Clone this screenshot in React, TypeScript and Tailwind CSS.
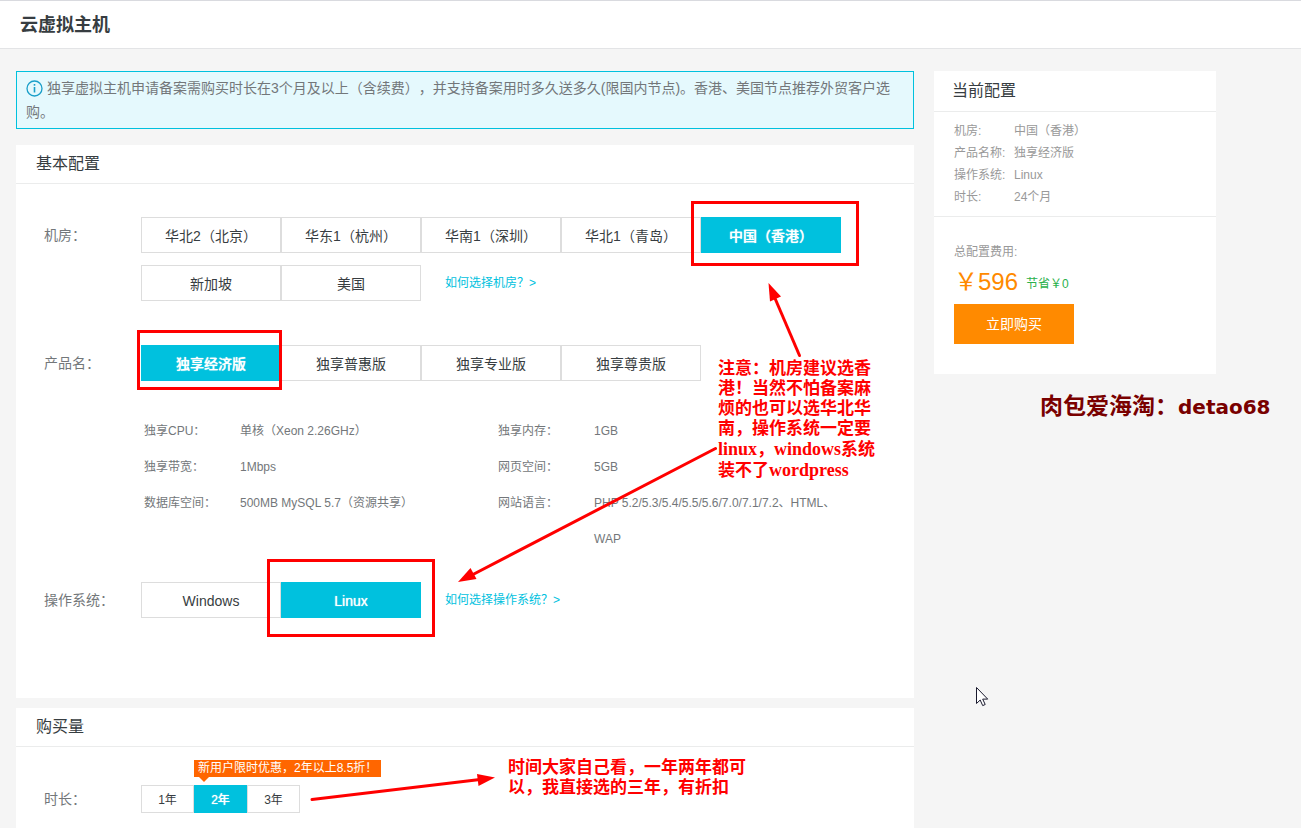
import React, { useState } from 'react';

const regions = ['华北2（北京）', '华东1（杭州）', '华南1（深圳）', '华北1（青岛）', '中国（香港）', '新加坡', '美国'];
const products = ['独享经济版', '独享普惠版', '独享专业版', '独享尊贵版'];
const systems = ['Windows', 'Linux'];
const durations = ['1年', '2年', '3年'];

const specs = [
  { name: '独享CPU：', value: '单核（Xeon 2.26GHz）' },
  { name: '独享内存：', value: '1GB' },
  { name: '独享带宽：', value: '1Mbps' },
  { name: '网页空间：', value: '5GB' },
  { name: '数据库空间：', value: '500MB MySQL 5.7（资源共享）' },
  { name: '网站语言：', value: 'PHP 5.2/5.3/5.4/5.5/5.6/7.0/7.1/7.2、HTML、WAP' },
];

interface OptionGroupProps {
  label: string;
  options: string[];
  value: string;
  onChange: (value: string) => void;
  small?: boolean;
  children?: React.ReactNode;
}

const OptionGroup: React.FC<OptionGroupProps> = ({ label, options, value, onChange, small, children }) => (
  <div className="flex pl-7 pr-6" role="group" aria-label={label}>
    <span className={`w-[97px] shrink-0 text-sm text-[#73777a] ${small ? 'leading-7' : 'leading-9'}`}>{label}</span>
    <div className="flex flex-1 flex-wrap gap-y-3">
      {options.map((option) => (
        <button
          key={option}
          type="button"
          aria-pressed={option === value}
          onClick={() => onChange(option)}
          className={`border pt-0.5 ${small ? 'h-7 w-[53px] text-xs' : 'h-9 w-[140px] text-sm'} ${
            option === value
              ? 'border-[#00c1de] bg-[#00c1de] font-medium text-white [text-shadow:0_0_1px_#fff]'
              : 'border-[#ddd] bg-white text-[#373d41]'
          }`}
        >
          {option}
        </button>
      ))}
      {children}
    </div>
  </div>
);

const HelpLink: React.FC<{ text: string }> = ({ text }) => (
  <a href="#help" className="ml-6 text-xs leading-9 text-[#00c1de]">{text}</a>
);

const SectionTitle: React.FC<{ text: string }> = ({ text }) => (
  <h2 className="h-[39px] border-b border-[#ebecec] px-5 text-base leading-[38px] text-[#373d41]">{text}</h2>
);

// Marcas rojas dibujadas encima de la página
const Annotations: React.FC = () => (
  <div className="pointer-events-none absolute inset-0 overflow-hidden text-[17px] font-bold leading-5 text-[#f00]">
    <div className="absolute left-[691px] top-[201px] h-[65px] w-[168px] border-3 border-[#f00]" />
    <div className="absolute left-[137px] top-[330px] h-[60px] w-[145px] border-3 border-[#f00]" />
    <div className="absolute left-[267px] top-[559px] h-[78px] w-[168px] border-3 border-[#f00]" />

    <svg className="absolute left-0 top-0" width="900" height="828" viewBox="0 0 900 828" fill="#f00" stroke="#f00">
      <g strokeWidth="3" strokeLinecap="round">
        <path d="M799.5 355.5 774 296" />
        <path d="M715.5 448.5 472 575" />
        <path d="M312 799.5 480 779.5" />
      </g>
      <g stroke="none">
        <path d="M768.5 283 781 296.500 770 301.500Z" />
        <path d="M458 582 470.500 568 476.500 579Z" />
        <path d="M495 777.500 477 774 478.500 786Z" />
      </g>
    </svg>

    <p className="absolute left-[718px] top-[359px] whitespace-nowrap font-['Liberation_Serif','Noto_Sans_CJK_SC',serif]">
      注意：机房建议选香<br />
      港！当然不怕备案麻<br />
      烦的也可以选华北华<br />
      南，操作系统一定要<br />
      <span className="text-lg leading-5">linux</span>，<span className="text-lg leading-5">windows</span>系统<br />
      装不了<span className="text-lg leading-5">wordpress</span>
    </p>
    <p className="absolute left-[508px] top-[758px] whitespace-nowrap">
      时间大家自己看，一年两年都可<br />
      以，我直接选的三年，有折扣
    </p>
    <p className="absolute left-[1040px] top-[392px] whitespace-nowrap text-[23px] leading-7 text-[#790000]">
      肉包爱海淘：<span className="font-['DejaVu_Sans',sans-serif] text-xl leading-7">detao68</span>
    </p>

    <svg className="absolute left-[976px] top-[687px]" width="13" height="20" viewBox="0 0 13 20">
      <path d="M.5.5v16l3.700-3.500 2.500 5.600 2.500-1.100-2.500-5.400h5Z" fill="#fff" stroke="#1a1a2e" />
    </svg>
  </div>
);

export default function App() {
  const [region, setRegion] = useState('中国（香港）');
  const [product, setProduct] = useState('独享经济版');
  const [system, setSystem] = useState('Linux');
  const [duration, setDuration] = useState('2年');

  const summary = [
    { name: '机房:', value: region },
    { name: '产品名称:', value: product },
    { name: '操作系统:', value: system },
    { name: '时长:', value: `${parseInt(duration) * 12}个月` },
  ];

  return (
    <div className="relative flex min-h-screen flex-col bg-[#f5f5f5] font-['Liberation_Sans','Noto_Sans_CJK_SC',sans-serif] [text-spacing-trim:space-all]">
      <header className="h-[49px] border-y border-b-[#e3e4e6] border-t-[#d9dadf] bg-white px-5">
        <h1 className="text-lg font-bold leading-[49px] text-[#373d41]">云虚拟主机</h1>
      </header>

      <div className="flex flex-1 gap-5 pl-4 pr-[85px] pt-[22px]">
        <main className="flex flex-1 flex-col">
          <p className="border border-[#00c1de] bg-[#e5f9fd] py-1 pl-[9px] pr-5 text-sm leading-6 text-[#73777a]">
            <svg className="mr-1 inline-block align-[-4px]" width="17" height="17" viewBox="0 0 17 17" fill="none" stroke="#1a9fc9">
              <circle cx="8.5" cy="8.5" r="7.5" strokeWidth="1.3" />
              <path d="M8.5 7v5.500" strokeWidth="1.6" />
              <path d="M8.5 4v1.700" strokeWidth="1.6" />
            </svg>
            独享虚拟主机申请备案需购买时长在3个月及以上（含续费），并支持备案用时多久送多久(限国内节点)。香港、美国节点推荐外贸客户选购。
          </p>

          <section className="mt-4 bg-white pb-20">
            <SectionTitle text="基本配置" />
            <div className="pt-[33px]">
              <OptionGroup label="机房：" options={regions} value={region} onChange={setRegion}>
                <HelpLink text="如何选择机房？>" />
              </OptionGroup>
            </div>
            <div className="pt-11">
              <OptionGroup label="产品名：" options={products} value={product} onChange={setProduct} />
            </div>

            {/* Especificaciones del producto */}
            <dl className="ml-32 mt-8 grid w-[708px] grid-cols-2 text-xs leading-9 text-[#73777a]">
              {specs.map((spec) => (
                <div key={spec.name} className="flex">
                  <dt className="w-24 shrink-0">{spec.name}</dt>
                  <dd>{spec.value}</dd>
                </div>
              ))}
            </dl>

            <div className="pt-[25px]">
              <OptionGroup label="操作系统：" options={systems} value={system} onChange={setSystem}>
                <HelpLink text="如何选择操作系统？>" />
              </OptionGroup>
            </div>
          </section>

          <section className="mt-2.5 flex-1 bg-white">
            <SectionTitle text="购买量" />
            <div className="relative pt-[38px]">
              <OptionGroup label="时长：" options={durations} value={duration} onChange={setDuration} small />
              <div className="absolute left-[178px] top-[13px] h-[17px] whitespace-nowrap bg-[#f60] px-1 text-xs leading-[17px] text-white">
                新用户限时优惠，2年以上8.5折！
                <span className="absolute left-[5px] top-full border-x-5 border-t-5 border-x-transparent border-t-[#f60]" />
              </div>
            </div>
          </section>
        </main>

        <aside className="w-[282px] shrink-0 self-start bg-white pb-[30px]">
          <h2 className="h-[41px] border-b border-[#ebecec] px-[18px] text-base leading-10 text-[#373d41]">当前配置</h2>
          <dl className="border-b border-[#ebecec] px-5 py-2 text-xs leading-[22px] text-[#999]">
            {summary.map((item) => (
              <div key={item.name} className="flex">
                <dt className="w-[60px]">{item.name}</dt>
                <dd>{item.value}</dd>
              </div>
            ))}
          </dl>
          <div className="px-5 pt-6">
            <p className="text-xs leading-[22px] text-[#999]">总配置费用:</p>
            <p className="mb-[3px] flex h-[38px] items-center gap-2">
              <span className="text-2xl text-[#ff8a00]">￥596</span>
              <span className="pt-1 text-xs text-[#2bb14c]">节省￥0</span>
            </p>
            <button type="button" className="h-10 w-[120px] bg-[#ff8a00] text-sm text-white">立即购买</button>
          </div>
        </aside>
      </div>

      <Annotations />
    </div>
  );
}
